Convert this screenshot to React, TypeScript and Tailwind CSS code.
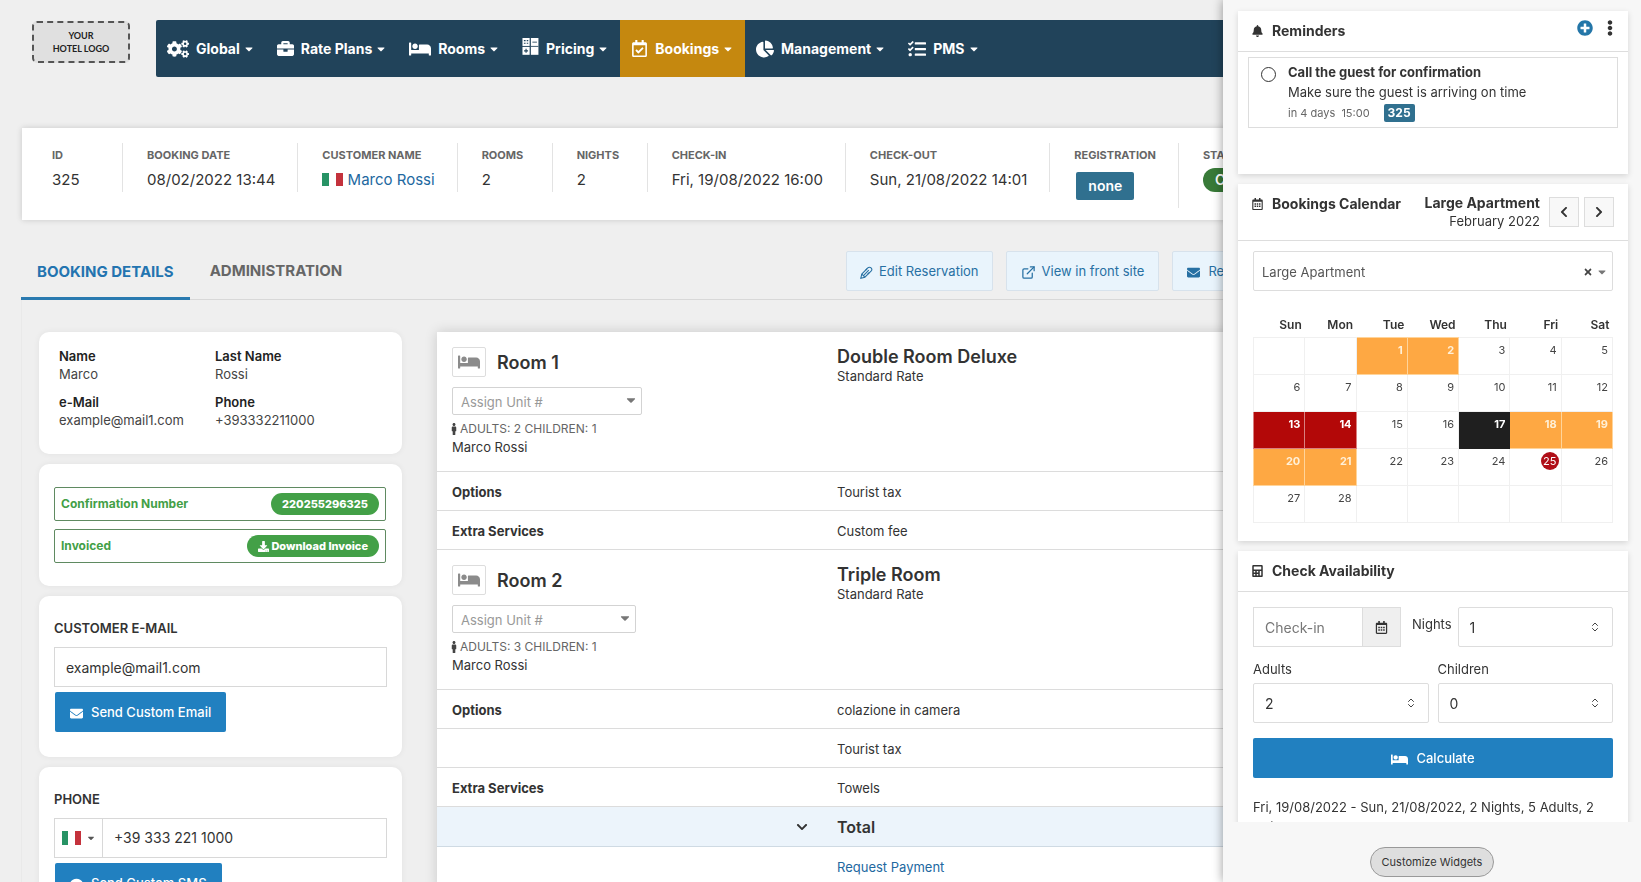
import type { ReactNode } from "react";
import {
  FaBed,
  FaBell,
  FaBriefcase,
  FaCalculator,
  FaCaretDown,
  FaChartPie,
  FaCogs,
  FaComment,
  FaDownload,
  FaEllipsisV,
  FaEnvelope,
  FaMale,
  FaPlusCircle,
  FaRegCalendarAlt,
  FaRegCalendarCheck,
  FaTasks,
  FaTimes,
  FaChevronDown,
  FaChevronLeft,
  FaChevronRight,
} from "react-icons/fa";
import { ChevronsUpDown, ExternalLink } from "lucide-react";

function PricingIcon() {
  return (
    <svg viewBox="0 0 18 18" className="-mt-1 size-[17px]" aria-hidden="true">
      <rect x="0.5" y="0" width="7.6" height="8.4" fill="#fff" />
      <rect x="0.5" y="9.4" width="7.6" height="8.4" fill="#fff" />
      <rect x="9.4" y="0" width="8" height="17.8" fill="#fff" />
      <path d="M2 2.8h1.8M5 2.8h1.6M2 5.6h1.8M5 5.6h1.6M2.2 13.6h4.2M4.3 11.5v4.2" stroke="#21435a" strokeWidth="1.2" />
      <path d="M11 4.4h4.8M9.4 8.9h8" stroke="#21435a" strokeWidth="0.9" />
    </svg>
  );
}

function EditIcon() {
  return (
    <svg viewBox="0 0 16 16" className="size-[13px]" fill="none" stroke="currentColor" strokeWidth="1.3" aria-hidden="true">
      <path d="M1 15l1.2-5L9.6 2.4a2.7 2.7 0 0 1 4 4L6 13.8z" />
      <path d="M4.6 11.4l6.2-6.2M2.2 10l3.8 3.8M7 5l1.8-1.8M9.4 9.9l2.2-2.2" />
    </svg>
  );
}

const nav: { label: string; icon: ReactNode; active?: boolean }[] = [
  { label: "Global", icon: <FaCogs className="size-[22px]" /> },
  { label: "Rate Plans", icon: <FaBriefcase className="size-[17px]" /> },
  { label: "Rooms", icon: <FaBed className="size-[22px]" /> },
  { label: "Pricing", icon: <PricingIcon /> },
  { label: "Bookings", icon: <FaRegCalendarCheck className="size-[17px]" />, active: true },
  { label: "Management", icon: <FaChartPie className="size-[18px]" /> },
  { label: "PMS", icon: <FaTasks className="size-[18px]" /> },
];

function Flag({ className }: { className: string }) {
  return (
    <span className={`inline-grid grid-cols-3 ${className}`} aria-hidden="true">
      <span className="bg-[#279365]" />
      <span className="bg-white" />
      <span className="bg-[#c4323c]" />
    </span>
  );
}

function Fact({ label, children, last }: { label: string; children: ReactNode; last?: boolean }) {
  return (
    <div className={`min-w-[95px] shrink-0 pr-[22px] pl-6 ${last ? "" : "border-r border-[#e3e3e3]"}`}>
      <dt className="pt-1 text-[11px] leading-4 font-bold text-[#666]">{label}</dt>
      <dd className="mt-[5px] text-[15px] leading-6 text-[#333]">{children}</dd>
    </div>
  );
}

function Card({ children, className }: { children: ReactNode; className: string }) {
  return <section className={`rounded-[10px] bg-white shadow-[0_0_6px_rgba(0,0,0,0.06)] ${className}`}>{children}</section>;
}

function Pair({ label, value }: { label: string; value: string }) {
  return (
    <div>
      <dt className="font-semibold text-[#222]">{label}</dt>
      <dd className="text-[#444]">{value}</dd>
    </div>
  );
}

function RoomRow({ n, adults, type, selectWidth }: { n: number; adults: number; type: string; selectWidth: string }) {
  return (
    <tr className="border-b border-[#dcdcdc] align-top">
      <td className="w-[400px] pt-[15px] pb-[15px] pl-[15px]">
        <div className="flex items-center gap-[11px]">
          <span className="flex h-[30px] w-[34px] items-center justify-center rounded-xs border border-[#ddd] text-[#8b8b8b]">
            <FaBed className="size-[22px]" />
          </span>
          <h3 className="pt-0.5 text-lg leading-6 font-semibold text-[#333]">Room {n}</h3>
        </div>
        <div className={`relative mt-[10px] ${selectWidth}`}>
          <select aria-label={`Unit for room ${n}`} className="block h-7 w-full appearance-none rounded-xs border border-[#d3d3d3] bg-white pt-[3px] pl-2 text-[13px] text-[#999]">
            <option>Assign Unit #</option>
          </select>
          <FaCaretDown className="pointer-events-none absolute top-1.5 right-1 size-3.5 text-[#777]" />
        </div>
        <p className="mt-1 flex items-center text-xs leading-[19px] text-[#666]">
          <FaMale className="-ml-1 size-3 text-[#444]" />
          ADULTS: {adults} CHILDREN: 1
        </p>
        <p className="text-[13px] leading-[18px] text-[#333]">Marco Rossi</p>
      </td>
      <td className="pt-[15px] text-[#333]">
        <h3 className="text-lg leading-5 font-semibold">{type}</h3>
        <p className="text-[13px] leading-[18px]">Standard Rate</p>
      </td>
    </tr>
  );
}

function LineRow({ label, value }: { label: string; value: string }) {
  return (
    <tr className="h-[39px] border-b border-[#dcdcdc] text-[13px] text-[#333]">
      <th scope="row" className="pt-[3px] pl-[15px] text-left font-bold">{label}</th>
      <td className="pt-[3px]">{value}</td>
    </tr>
  );
}

function Widget({ icon, title, children, actions, headerHeight, className }: { icon: ReactNode; title: string; children: ReactNode; actions?: ReactNode; headerHeight: string; className: string }) {
  return (
    <section className={`shrink-0 bg-white shadow-[0_2px_6px_rgba(0,0,0,0.14)] ${className}`}>
      <header className={`flex justify-between border-b border-[#ddd] pr-[14px] pl-[14px] ${headerHeight}`}>
        <h2 className="flex h-[39px] shrink-0 items-center gap-[9px] text-sm font-bold text-[#333]">
          <span className="flex w-[11px] justify-center">{icon}</span>
          {title}
        </h2>
        {actions}
      </header>
      {children}
    </section>
  );
}

function NumberField({ id, value, className }: { id: string; value: string; className: string }) {
  return (
    <div className={`relative ${className}`}>
      <input id={id} inputMode="numeric" defaultValue={value} className="block h-10 w-full rounded-xs border border-[#ddd] bg-white px-[11px] text-sm text-[#333]" />
      <ChevronsUpDown className="pointer-events-none absolute top-[14px] right-3 size-3 text-[#444]" />
    </div>
  );
}

const weekdays = ["Sun", "Mon", "Tue", "Wed", "Thu", "Fri", "Sat"];
const weeks = [0, 1, 2, 3, 4].map((w) =>
  weekdays.map((_, d) => {
    const day = w * 7 + d - 1;
    return day >= 1 && day <= 28 ? day : null;
  }),
);
const partial = [1, 2, 18, 19, 20, 21];
const full = [13, 14];

function dayClass(day: number | null) {
  if (day === null) return "border-[#f0f0f0]";
  if (partial.includes(day)) return "border-[#ffd49a] bg-[#fea843] font-bold text-[#fff0d8]";
  if (full.includes(day)) return "border-[#d98080] bg-[#b30808] font-bold text-white";
  if (day === 17) return "border-[#1f1f1f] bg-[#1f1f1f] font-bold text-white";
  return "border-[#f0f0f0] text-[#444]";
}

export default function App() {
  return (
    <div className="h-screen overflow-hidden bg-[#efefef] font-['Inter',sans-serif] text-[#333]">
      <header className="flex pt-5 pr-5 pl-8">
        <a href="#home" className="mt-px flex h-[42px] w-[98px] shrink-0 flex-col items-center justify-center rounded-[5px] border-2 border-dashed border-[#555] bg-[#e0e0e0] font-['Lato',sans-serif] text-[9px] leading-[13px] font-bold text-[#222]">
          <span>YOUR</span>
          <span>HOTEL LOGO</span>
        </a>
        <nav className="ml-[26px] flex h-[57px] min-w-0 flex-1 rounded-xs bg-[#21435a] text-white">
          {nav.map((item) => (
            <button key={item.label} type="button" className={`flex h-full shrink-0 items-center gap-[7px] px-[11px] text-sm font-bold ${item.active ? "bg-[#c5880f]" : ""}`}>
              {item.icon}
              <span className="flex items-center gap-[3px]">
                {item.label}
                <FaCaretDown className="size-3" />
              </span>
            </button>
          ))}
        </nav>
      </header>

      <dl className="mt-[51px] mr-5 ml-[22px] flex h-[92px] items-start overflow-hidden bg-white pt-[15px] pl-1.5 shadow-[0_0_6px_rgba(0,0,0,0.16)]">
        <Fact label="ID">325</Fact>
        <Fact label="BOOKING DATE">08/02/2022 13:44</Fact>
        <Fact label="CUSTOMER NAME">
          <a href="#customer" className="text-[#22689f]"><Flag className="h-[13px] w-[21px] align-[-1px]" /> Marco Rossi</a>
        </Fact>
        <Fact label="ROOMS">2</Fact>
        <Fact label="NIGHTS">2</Fact>
        <Fact label="CHECK-IN">Fri, 19/08/2022 16:00</Fact>
        <Fact label="CHECK-OUT">Sun, 21/08/2022 14:01</Fact>
        <Fact label="REGISTRATION">
          <span className="mt-1 mb-2 ml-0.5 inline-block h-7 rounded-xs bg-[#30708f] px-3 text-sm leading-7 font-semibold text-white">none</span>
        </Fact>
        <Fact label="STATUS" last>
          <span className="inline-block rounded-full bg-[#387a38] px-3 text-sm leading-6 font-semibold text-white">Confirmed</span>
        </Fact>
      </dl>

      <div className="mt-[31px] mr-5 ml-[21px] flex h-[49px] border-b border-[#d8d8d8]">
        <button type="button" className="-mb-px h-[49px] border-b-3 border-[#2a7ab0] px-4 pb-1 text-[15px] font-bold text-[#2374b0]">BOOKING DETAILS</button>
        <button type="button" className="ml-1 px-4 pb-[7px] text-[15px] font-bold text-[#666]">ADMINISTRATION</button>
        <div className="ml-auto flex h-10 w-[775px] gap-[13px] text-[13px] text-[#2770a3]">
          <button type="button" className="flex items-center gap-1.5 rounded-xs border border-[#d7e2ec] bg-[#e9f4fc] px-[13px] pt-0.5"><EditIcon />Edit Reservation</button>
          <button type="button" className="flex items-center gap-1.5 rounded-xs border border-[#d7e2ec] bg-[#e9f4fc] px-[14px] pt-0.5"><ExternalLink className="size-[15px]" />View in front site</button>
          <button type="button" className="flex items-center gap-2 rounded-xs border border-[#d7e2ec] bg-[#e9f4fc] px-[14px] pt-0.5"><FaEnvelope className="size-[13px]" />Resend Email</button>
        </div>
      </div>

      <main className="mr-5 ml-[21px] flex items-start gap-[35px] border-l border-[#e9e9e9] pt-8 pl-[17px]">
        <div className="flex w-[363px] shrink-0 flex-col gap-[10px]">
          <Card className="px-5 pt-[15px] pb-[25px]">
            <dl className="grid grid-cols-[156px_1fr] gap-y-[10px] text-[13px] leading-[18px]">
              <Pair label="Name" value="Marco" />
              <Pair label="Last Name" value="Rossi" />
              <Pair label="e-Mail" value="example@mail1.com" />
              <Pair label="Phone" value="+393332211000" />
            </dl>
          </Card>
          <Card className="flex flex-col gap-2 py-[23px] pr-4 pl-[15px] text-xs font-bold text-[#43a047]">
            <div className="flex h-[34px] items-center justify-between rounded-xs border border-[#5f8a61] px-1.5">
              Confirmation Number
              <span className="h-[22px] rounded-full bg-[#43a047] px-[11px] text-[11px] leading-[22px] font-extrabold text-white">220255296325</span>
            </div>
            <div className="flex h-[34px] items-center justify-between rounded-xs border border-[#5f8a61] px-1.5">
              Invoiced
              <a href="#invoice" className="flex h-[22px] items-center gap-0.5 rounded-full bg-[#43a047] px-[11px] text-[11px] font-extrabold text-white"><FaDownload className="size-[11px]" />Download Invoice</a>
            </div>
          </Card>
          <Card className="px-[15px] pt-[23px] pb-[25px]">
            <label htmlFor="email" className="block text-[13px] leading-[18px] font-semibold">CUSTOMER E-MAIL</label>
            <input id="email" type="email" defaultValue="example@mail1.com" className="mt-[10px] block h-10 w-full border border-[#d8d8d8] px-[11px] text-sm" />
            <button type="button" className="mt-[5px] ml-px flex h-10 items-center gap-2 rounded-xs bg-[#2180c0] px-[15px] pt-0.5 text-[13px] font-medium text-white"><FaEnvelope className="size-[13px]" />Send Custom Email</button>
          </Card>
          <Card className="px-[15px] pt-[23px] pb-[25px]">
            <label htmlFor="phone" className="block text-[13px] leading-[18px] font-semibold">PHONE</label>
            <div className="mt-[10px] flex h-10 border border-[#d8d8d8]">
              <button type="button" aria-label="Country" className="flex w-12 items-center justify-center gap-1 border-r border-[#d8d8d8]"><Flag className="h-[14px] w-[20px]" /><FaCaretDown className="size-2.5 text-[#555]" /></button>
              <input id="phone" type="tel" defaultValue="+39 333 221 1000" className="min-w-0 flex-1 px-[11px] text-sm" />
            </div>
            <button type="button" className="mt-[5px] ml-px flex h-10 items-center gap-2 rounded-xs bg-[#2180c0] px-[15px] pt-0.5 text-[13px] font-medium text-white"><FaComment className="size-[13px]" />Send Custom SMS</button>
          </Card>
        </div>

        <div className="min-w-0 flex-1 bg-white shadow-[0_0_12px_rgba(0,0,0,0.16)]">
          <table className="w-full border-collapse">
            <tbody>
              <RoomRow n={1} adults={2} type="Double Room Deluxe" selectWidth="w-[190px]" />
              <LineRow label="Options" value="Tourist tax" />
              <LineRow label="Extra Services" value="Custom fee" />
              <RoomRow n={2} adults={3} type="Triple Room" selectWidth="w-[184px]" />
              <LineRow label="Options" value="colazione in camera" />
              <LineRow label="" value="Tourist tax" />
              <LineRow label="Extra Services" value="Towels" />
              <tr className="h-10 border-b border-[#cfdae3] bg-[#ecf4fb]">
                <td className="pr-[29px]"><button type="button" aria-label="Expand total" className="ml-auto block"><FaChevronDown className="size-3" /></button></td>
                <th scope="row" className="text-left text-base font-semibold">Total</th>
              </tr>
              <tr className="h-[41px] text-[13px]">
                <td />
                <td><a href="#pay" className="text-[#22689f]">Request Payment</a></td>
              </tr>
            </tbody>
          </table>
        </div>
      </main>

      <aside className="fixed inset-y-0 right-0 flex w-[418px] flex-col bg-[#f7f7f7] shadow-[0_0_10px_rgba(0,0,0,0.4)]">
        <div className="flex min-h-0 flex-1 flex-col gap-[10px] overflow-hidden pt-[11px] pr-[13px] pl-[15px]">
          <Widget
            icon={<FaBell className="size-3" />}
            title="Reminders"
            headerHeight="h-[41px]"
            className="h-[163px]"
            actions={
              <div className="-mr-1 flex items-center gap-[9px] pb-1.5">
                <button type="button" aria-label="Add reminder"><FaPlusCircle className="size-4 text-[#2476a8]" /></button>
                <button type="button" aria-label="More"><FaEllipsisV className="size-4" /></button>
              </div>
            }
          >
            <div className="mx-[10px] mt-[5px] flex h-[71px] gap-3 border border-[#ddd] pt-[5px] pl-3">
              <input type="checkbox" aria-label="Done" className="mt-1 size-[15px] shrink-0 appearance-none rounded-full border border-[#333]" />
              <div>
                <h3 className="text-[13px] leading-[18px] font-bold">Call the guest for confirmation</h3>
                <p className="text-[13px] leading-[22px]">Make sure the guest is arriving on time</p>
                <p className="flex h-5 items-center text-[11px] text-[#666]">
                  in 4 days&nbsp; 15:00
                  <span className="ml-[14px] h-[18px] rounded-xs bg-[#30708f] px-1 text-xs leading-[18px] font-bold text-white">325</span>
                </p>
              </div>
            </div>
          </Widget>

          <Widget
            icon={<FaRegCalendarAlt className="size-3" />}
            title="Bookings Calendar"
            headerHeight="h-[57px]"
            className="h-[357px]"
            actions={
              <div className="flex items-center gap-[5px]">
                <div className="mr-1 pb-px text-right">
                  <div className="text-sm leading-[19px] font-bold">Large Apartment</div>
                  <div className="text-[13px] leading-[18px]">February 2022</div>
                </div>
                <button type="button" aria-label="Previous month" className="flex size-[30px] items-center justify-center border border-[#ddd] bg-[#f8f8f8]"><FaChevronLeft className="size-3" /></button>
                <button type="button" aria-label="Next month" className="flex size-[30px] items-center justify-center border border-[#ddd] bg-[#f8f8f8]"><FaChevronRight className="size-3" /></button>
              </div>
            }
          >
            <div className="px-[15px] pt-[10px]">
              <div className="relative">
                <select aria-label="Room type" className="block h-10 w-full appearance-none rounded-xs border border-[#ddd] bg-white pt-[3px] pl-2 text-[13px] text-[#555]">
                  <option>Large Apartment</option>
                </select>
                <button type="button" aria-label="Clear" className="absolute top-4 right-5"><FaTimes className="size-2.5 text-[#444]" /></button>
                <FaCaretDown className="pointer-events-none absolute top-[15px] right-[5px] size-3 text-[#777]" />
              </div>
              <table className="mt-[23px] w-full table-fixed border-collapse text-[11px]">
                <thead>
                  <tr className="h-[23px]">
                    {weekdays.map((d) => <th key={d} scope="col" className="pr-[3px] text-right text-xs font-semibold">{d}</th>)}
                  </tr>
                </thead>
                <tbody>
                  {weeks.map((week, i) => (
                    <tr key={i} className="h-[37px] align-top">
                      {week.map((day, j) => (
                        <td key={j} className={`border pt-[3px] pr-1 text-right leading-[18px] ${dayClass(day)}`}>
                          {day === 25 ? <span className="-mr-0.5 inline-block size-[18px] rounded-full bg-[#b00f18] text-center text-white">25</span> : day}
                        </td>
                      ))}
                    </tr>
                  ))}
                </tbody>
              </table>
            </div>
          </Widget>

          <Widget icon={<FaCalculator className="size-3" />} title="Check Availability" headerHeight="h-[41px]" className="">
            <div className="px-[15px] pt-[15px] text-[13px]">
              <div className="flex">
                <input aria-label="Check-in" placeholder="Check-in" className="h-10 w-[110px] border border-[#ddd] px-[11px] text-sm placeholder:text-[#777]" />
                <button type="button" aria-label="Pick a date" className="flex h-10 w-[38px] items-center justify-center border border-l-0 border-[#ddd] bg-[#efefef]"><FaRegCalendarAlt className="size-[13px]" /></button>
                <label htmlFor="nights" className="mt-2 mr-1.5 ml-[11px]">Nights</label>
                <NumberField id="nights" value="1" className="flex-1" />
              </div>
              <div className="mt-[13px] grid grid-cols-2 gap-x-[9px]">
                <label htmlFor="adults" className="leading-[18px]">Adults</label>
                <label htmlFor="children" className="leading-[18px]">Children</label>
                <NumberField id="adults" value="2" className="mt-[5px]" />
                <NumberField id="children" value="0" className="mt-[5px]" />
              </div>
              <button type="button" className="mt-[15px] flex h-10 w-full items-center justify-center gap-2 rounded-xs bg-[#2180c0] pt-0.5 text-[13px] font-medium text-white"><FaBed className="size-[17px]" />Calculate</button>
              <p className="mt-[19px] leading-5">Fri, 19/08/2022 - Sun, 21/08/2022, 2 Nights, 5 Adults, 2 Children</p>
            </div>
          </Widget>
        </div>
        <footer className="flex h-[60px] shrink-0 justify-center pt-[25px]">
          <button type="button" className="h-[30px] rounded-full border border-[#999] bg-[#dedede] px-[11px] text-[11px]">Customize Widgets</button>
        </footer>
      </aside>
    </div>
  );
}
